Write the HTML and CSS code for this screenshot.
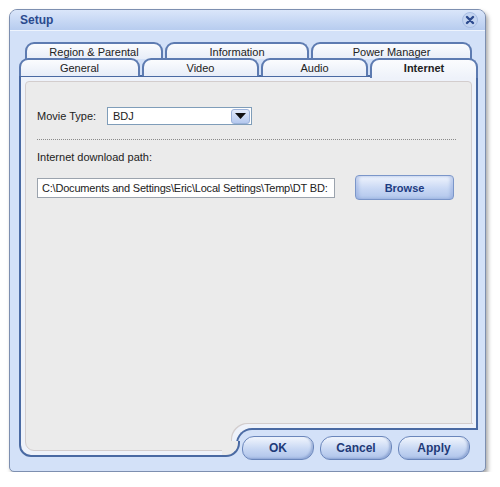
FILE: index.html
```html
<!DOCTYPE html>
<html lang="en">
<head>
  <meta charset="UTF-8">
  <title>Setup</title>
  <link rel="stylesheet" href="styles.css">
</head>
<body>
  <div class="window">
    <!-- Barra de título -->
    <div class="titlebar">
      <span class="title">Setup</span>
      <span class="close">
        <svg width="16" height="16" viewBox="0 0 16 16">
          <circle cx="8" cy="8" r="7.5" fill="#c3d4f1" stroke="#a7bde3"/>
          <path d="M5 5 L11 11 M11 5 L5 11" stroke="#2c4a8e" stroke-width="2.4" stroke-linecap="round"/>
        </svg>
      </span>
    </div>

    <div class="body">
      <!-- Pestañas -->
      <div class="tabs">
        <div class="tab-row back">
          <div class="tab t-region">Region &amp; Parental</div>
          <div class="tab t-info">Information</div>
          <div class="tab t-power">Power Manager</div>
        </div>
        <div class="tab-row front">
          <div class="tab t-general">General</div>
          <div class="tab t-video">Video</div>
          <div class="tab t-audio">Audio</div>
          <div class="tab t-internet active">Internet</div>
        </div>
      </div>

      <!-- Panel de la pestaña activa -->
      <div class="panel">
        <div class="content">
          <div class="field-row">
            <span class="field-label">Movie Type:</span>
            <div class="select">
              <span>BDJ</span>
              <span class="arrow">
                <svg width="11" height="7" viewBox="0 0 11 7"><path d="M0 0 H11 L5.5 6 Z" fill="#111"/></svg>
              </span>
            </div>
          </div>
          <div class="sep"></div>
          <div class="path-label">Internet download path:</div>
          <div class="path-row">
            <div class="input">C:\Documents and Settings\Eric\Local Settings\Temp\DT BD:</div>
            <button class="btn browse">Browse</button>
          </div>
        </div>

        <div class="tray">
          <button class="pill">OK</button>
          <button class="pill">Cancel</button>
          <button class="pill">Apply</button>
        </div>
      </div>
    </div>
  </div>
</body>
</html>
```

FILE: styles.css
```css
/* Reset y tipografía */
* {
  box-sizing: border-box;
  margin: 0;
  padding: 0;
}

body {
  background: #fff;
  color: #222;
  font-family: "Liberation Sans", Arial, sans-serif;
  font-size: 11px;
}

/* Ventana */
.window {
  margin: 9px 0 0 9px;
  width: 477px;
  height: 463px;
  border: 1px solid #7d8fb0;
  border-radius: 8px 8px 5px 5px;
  background: #d3e1f8;
  box-shadow: 2px 3px 4px rgba(0, 0, 0, 0.35);
}

.titlebar {
  height: 21px;
  display: flex;
  align-items: center;
  justify-content: space-between;
  padding: 0 7px 0 10px;
  background: linear-gradient(#dae6fa, #b7ccef);
  border-bottom: 1px solid #eef4fd;
  border-radius: 7px 7px 0 0;
}

.title {
  font-size: 12px;
  font-weight: bold;
  color: #2a4a8e;
}

.close svg {
  display: block;
}

.body {
  padding-top: 11px;
}

/* Pestañas */
.tab-row {
  display: flex;
  gap: 2px;
}

.back {
  margin-left: 15px;
}

.front {
  margin-left: 9px;
  margin-top: -1px;
  position: relative;
  z-index: 2;
}

.tab {
  height: 17px;
  border: 2px solid #5d7bb1;
  border-bottom: none;
  border-radius: 9px 9px 0 0;
  background: linear-gradient(#fbfcfe, #e7edf8);
  text-align: center;
  line-height: 16px;
  color: #222;
}

.front .tab {
  height: 18px;
}

.t-region { width: 138px; }
.t-info { width: 144px; }
.t-power { width: 161px; }
.t-general { width: 121px; }
.t-video { width: 117px; }
.t-audio { width: 107px; }
.t-internet { width: 108px; }

.tab.active {
  height: 20px;
  margin-bottom: -2px;
  font-weight: bold;
  background: linear-gradient(#fbfcfe, #eef2fa);
}

/* Panel */
.panel {
  position: relative;
  margin-left: 9px;
  margin-top: -1px;
  width: 459px;
  height: 382px;
  border: 2px solid #4a6aa3;
  border-radius: 0 0 4px 12px;
  background: #eef2fa;
  padding: 4px;
}

.content {
  height: 100%;
  background: #ebebeb;
  border: 1px solid #d3cdcd;
  border-radius: 4px 4px 4px 9px;
  padding: 25px 15px 0 11px;
}

.field-row {
  display: flex;
  align-items: center;
  height: 18px;
}

.field-label {
  width: 70px;
}

.select {
  width: 145px;
  height: 18px;
  display: flex;
  align-items: center;
  justify-content: space-between;
  padding: 0 1px 0 5px;
  background: #fff;
  border: 1px solid #7f9db9;
}

.arrow {
  width: 19px;
  height: 15px;
  display: flex;
  align-items: center;
  justify-content: center;
  border: 1px solid #9cb2da;
  border-radius: 3px;
  background: linear-gradient(#e3ebfb, #b4c8ee);
}

.sep {
  margin-top: 14px;
  border-top: 1px dotted #8a8a8a;
}

.path-label {
  margin-top: 11px;
  line-height: 13px;
}

.path-row {
  display: flex;
  align-items: center;
  gap: 20px;
  margin-top: 11px;
}

.input {
  width: 298px;
  height: 20px;
  padding: 0 3px 0 4px;
  line-height: 18px;
  letter-spacing: -0.2px;
  background: #fff;
  border: 1px solid #9ba3ad;
  white-space: nowrap;
  overflow: hidden;
}

.btn {
  font-family: inherit;
  font-size: 11px;
  font-weight: bold;
  color: #1d3c82;
  cursor: pointer;
}

.browse {
  width: 99px;
  height: 25px;
  border: 1px solid #7b96c9;
  border-radius: 4px;
  background: linear-gradient(#f0f4fd, #c9d8f4 55%, #b2c6ec);
  box-shadow: inset -3px 0 3px rgba(120, 150, 210, 0.35), inset 3px 0 3px rgba(120, 150, 210, 0.35);
}

/* Bandeja de botones inferior */
.tray {
  position: absolute;
  right: -2px;
  bottom: -2px;
  width: 242px;
  height: 29px;
  display: flex;
  gap: 6px;
  padding: 6px 0 0 4px;
  background: #d3e1f8;
  border-top: 2px solid #4a6aa3;
  border-left: 2px solid #4a6aa3;
  border-top-left-radius: 16px;
  box-shadow: -4px -4px 0 0 #eef2fa, -5px -5px 0 0 #d3cdcd;
}

.tray::after,
.tray::before {
  content: "";
  position: absolute;
  bottom: 0;
  height: 14px;
}

.tray::after {
  left: -14px;
  width: 14px;
  background: #d3e1f8;
}

.tray::before {
  z-index: 1;
  left: -16px;
  width: 16px;
  background: #ebebeb;
  border-right: 2px solid #4a6aa3;
  border-bottom: 2px solid #4a6aa3;
  border-bottom-right-radius: 14px;
}

.pill {
  width: 72px;
  height: 24px;
  flex: none;
  font-family: inherit;
  font-size: 12px;
  font-weight: bold;
  color: #1f3a78;
  border: 1px solid #6a86bb;
  border-radius: 12px 10px 12px 10px;
  background: linear-gradient(#f1f5fd, #c7d7f3 55%, #aec3ea);
  box-shadow: inset -2px -1px 2px rgba(90, 120, 180, 0.4);
  cursor: pointer;
}
```
